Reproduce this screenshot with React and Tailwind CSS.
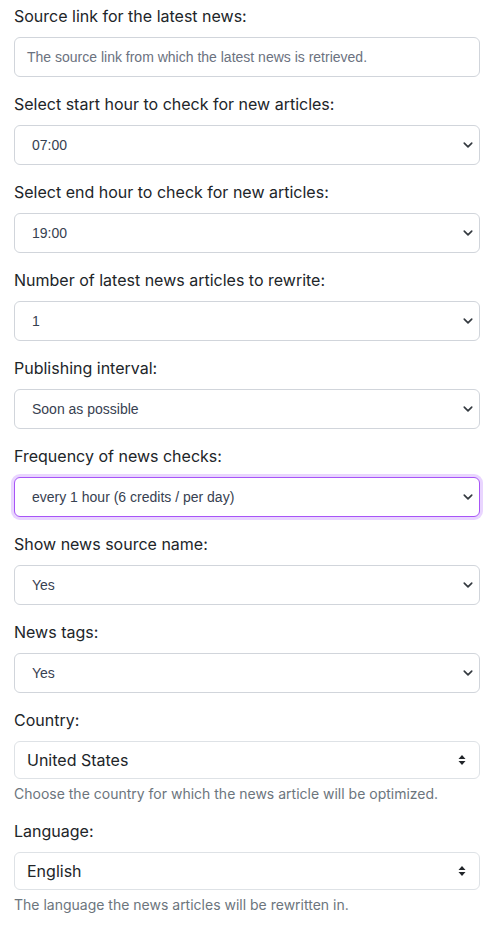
import React from "react";

const Chevron = () => (
  <svg width="10" height="10" viewBox="0 0 16 16" className="shrink-0">
    <path d="M2 5l6 6 6-6" fill="none" stroke="#343a40" strokeWidth="2.6" strokeLinecap="round" strokeLinejoin="round" />
  </svg>
);

const UpDown = () => (
  <svg width="8" height="12" viewBox="0 0 8 12" className="shrink-0">
    <path d="M4 1L7.5 5H0.5z" fill="#212529" />
    <path d="M4 11L7.5 7H0.5z" fill="#212529" />
  </svg>
);

const Label = ({ children }) => (
  <div className="text-[16px] leading-6 text-[#212529] mb-[9px]" style={{ fontFamily: "Inter, sans-serif" }}>
    {children}
  </div>
);

const SelectBox = ({ value, focused }) => (
  <div
    className={
      "h-10 rounded-md bg-white flex items-center justify-between pl-[17px] pr-[3px] " +
      (focused
        ? "border border-[#a855f7] ring-[3px] ring-[#e9d5ff]"
        : "border border-[#d1d5db]")
    }
  >
    <span className="text-[14px] text-[#374151]" style={{ fontFamily: '"Liberation Sans", Arial, sans-serif' }}>
      {value}
    </span>
    <span className="w-[16px] flex justify-center">
      <Chevron />
    </span>
  </div>
);

const Field = ({ label, value, focused }) => (
  <div className="mb-[15px]">
    <Label>{label}</Label>
    <SelectBox value={value} focused={focused} />
  </div>
);

const CustomSelect = ({ label, value, help }) => (
  <div className="mb-[15px]">
    <Label>{label}</Label>
    <div className="h-[38px] rounded-md border border-[#dee2e6] bg-white flex items-center justify-between pl-[12px] pr-[13px]">
      <span className="text-[16px] text-[#212529]" style={{ fontFamily: "Inter, sans-serif" }}>
        {value}
      </span>
      <UpDown />
    </div>
    <div className="mt-[4px] text-[14px] leading-[21px] text-[#6c757d]" style={{ fontFamily: "Inter, sans-serif" }}>
      {help}
    </div>
  </div>
);

export default function App() {
  return (
    <div className="w-[494px] min-h-[927px] bg-white px-[14px] pt-[4px]">
      <div className="mb-[15px]">
        <Label>Source link for the latest news:</Label>
        <div className="h-10 rounded-md border border-[#d1d5db] bg-white flex items-center pl-[12px]">
          <span className="text-[14px] text-[#6b7280]" style={{ fontFamily: '"Liberation Sans", Arial, sans-serif' }}>
            The source link from which the latest news is retrieved.
          </span>
        </div>
      </div>
      <Field label="Select start hour to check for new articles:" value="07:00" />
      <Field label="Select end hour to check for new articles:" value="19:00" />
      <Field label="Number of latest news articles to rewrite:" value="1" />
      <Field label="Publishing interval:" value="Soon as possible" />
      <Field label="Frequency of news checks:" value="every 1 hour (6 credits / per day)" focused />
      <Field label="Show news source name:" value="Yes" />
      <Field label="News tags:" value="Yes" />
      <CustomSelect label="Country:" value="United States" help="Choose the country for which the news article will be optimized." />
      <CustomSelect label="Language:" value="English" help="The language the news articles will be rewritten in." />
    </div>
  );
}
